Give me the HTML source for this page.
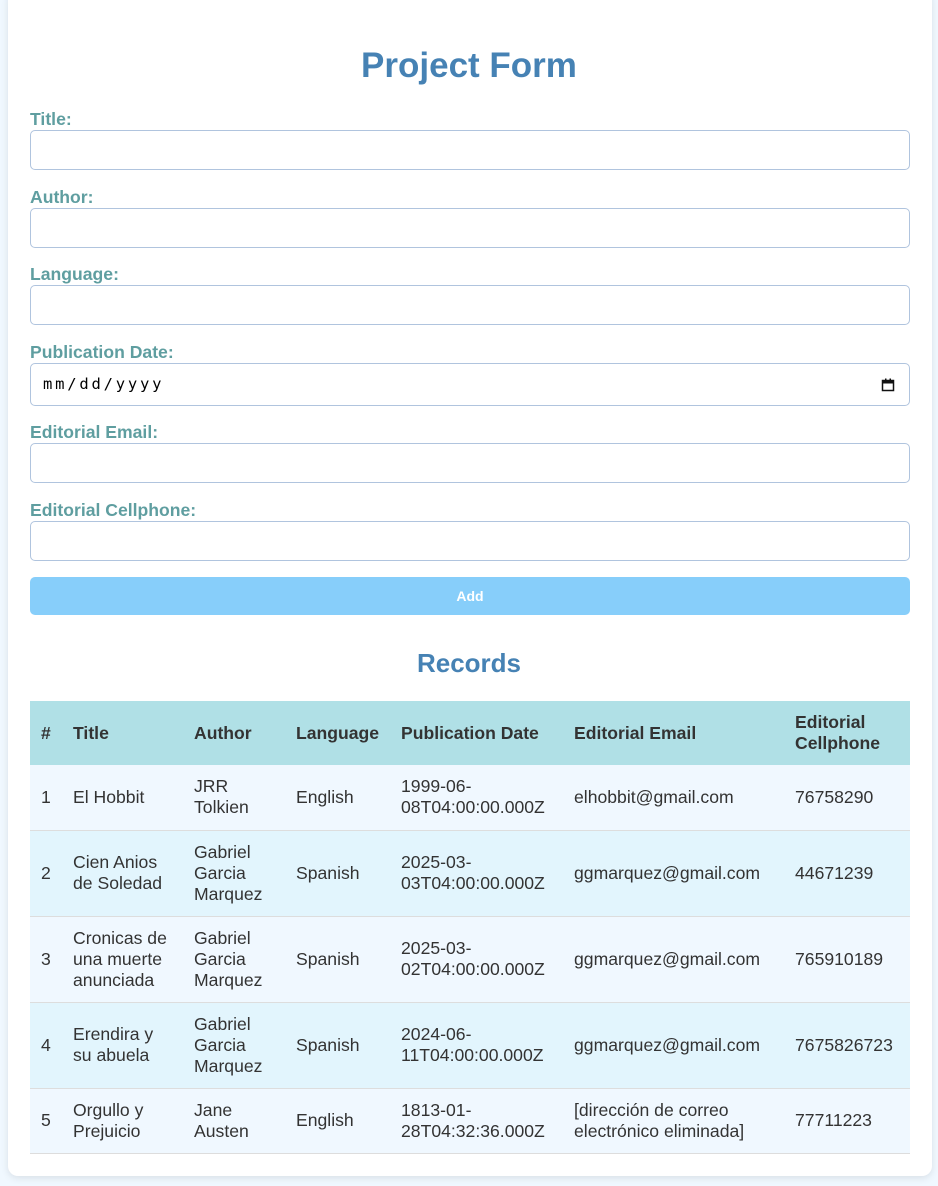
<!DOCTYPE html>
<html><head><meta charset="utf-8"><style>
*{box-sizing:border-box}
body{margin:0;background:#f0f8ff;font-family:"Liberation Sans",sans-serif;width:938px;height:1186px;overflow:hidden;position:relative}
.card{position:absolute;left:8px;top:-10px;width:924px;height:1186px;background:#fff;border-radius:10px;box-shadow:0 2px 8px rgba(0,0,0,0.1)}
h1{position:absolute;left:0;width:938px;top:45px;margin:0;text-align:center;color:#4682b4;font-size:35px;font-weight:bold;line-height:42px}
label{position:absolute;left:30px;color:#5f9ea0;font-weight:bold;font-size:17.6px;line-height:20px}
.in{position:absolute;left:30px;width:880px;height:40px;border:1px solid #b0c4de;border-radius:5px;background:#fff}
.btn{position:absolute;left:30px;top:577px;width:880px;height:38px;background:#87cefa;border-radius:5px;color:#fff;font-weight:bold;font-size:14px;text-align:center;line-height:38px}
h2{position:absolute;left:0;width:938px;top:648px;margin:0;text-align:center;color:#4682b4;font-size:26px;line-height:30px}
table{position:absolute;left:30px;top:701px;width:880px;border-collapse:collapse;table-layout:fixed;font-size:17.6px;color:#333;line-height:21px}
th,td{padding:11px 8px 11px 10px;text-align:left;vertical-align:middle}
th:first-child,td:first-child{padding-left:11px}
th{background:#b0e0e6;font-weight:bold;height:64px}
td{border-bottom:1px solid #ddd}
tr.o td{background:#f0f8ff}
tr.e td{background:#e2f5fd}
</style></head><body>
<div class="card"></div>
<h1>Project Form</h1>
<label style="top:109px">Title:</label><div class="in" style="top:130px"></div>
<label style="top:187px">Author:</label><div class="in" style="top:208px"></div>
<label style="top:264px">Language:</label><div class="in" style="top:285px"></div>
<label style="top:342px">Publication Date:</label>
<div class="in" style="top:363px;height:43px"><span style="position:absolute;left:12px;top:11px;font-family:'DejaVu Sans Mono','Liberation Mono',monospace;font-size:15.5px;letter-spacing:2.8px;color:#000">mm/dd/yyyy</span>
<svg style="position:absolute;right:14px;top:14px" width="14" height="14" viewBox="0 0 14 14"><rect x="1.5" y="2.5" width="11" height="10" fill="none" stroke="#111" stroke-width="1.5"/><rect x="1.5" y="2.5" width="11" height="3" fill="#111"/><rect x="4" y="0.5" width="1.5" height="3" fill="#111"/><rect x="8.5" y="0.5" width="1.5" height="3" fill="#111"/></svg></div>
<label style="top:422px">Editorial Email:</label><div class="in" style="top:443px"></div>
<label style="top:500px">Editorial Cellphone:</label><div class="in" style="top:521px"></div>
<div class="btn">Add</div>
<h2>Records</h2>
<table>
<colgroup><col style="width:33px"><col style="width:121px"><col style="width:102px"><col style="width:105px"><col style="width:173px"><col style="width:221px"><col style="width:125px"></colgroup>
<tr><th>#</th><th>Title</th><th>Author</th><th>Language</th><th>Publication Date</th><th>Editorial Email</th><th>Editorial Cellphone</th></tr>
<tr class="o" style="height:65px"><td>1</td><td>El Hobbit</td><td>JRR Tolkien</td><td>English</td><td>1999-06-08T04:00:00.000Z</td><td>elhobbit@gmail.com</td><td>76758290</td></tr>
<tr class="e" style="height:86px"><td>2</td><td>Cien Anios de Soledad</td><td>Gabriel Garcia Marquez</td><td>Spanish</td><td>2025-03-03T04:00:00.000Z</td><td>ggmarquez@gmail.com</td><td>44671239</td></tr>
<tr class="o" style="height:86px"><td>3</td><td>Cronicas de una muerte anunciada</td><td>Gabriel Garcia Marquez</td><td>Spanish</td><td>2025-03-02T04:00:00.000Z</td><td>ggmarquez@gmail.com</td><td>765910189</td></tr>
<tr class="e" style="height:86px"><td>4</td><td>Erendira y su abuela</td><td>Gabriel Garcia Marquez</td><td>Spanish</td><td>2024-06-11T04:00:00.000Z</td><td>ggmarquez@gmail.com</td><td>7675826723</td></tr>
<tr class="o" style="height:65px"><td>5</td><td>Orgullo y Prejuicio</td><td>Jane Austen</td><td>English</td><td>1813-01-28T04:32:36.000Z</td><td>[dirección de correo electrónico eliminada]</td><td>77711223</td></tr>
</table>
</body></html>
